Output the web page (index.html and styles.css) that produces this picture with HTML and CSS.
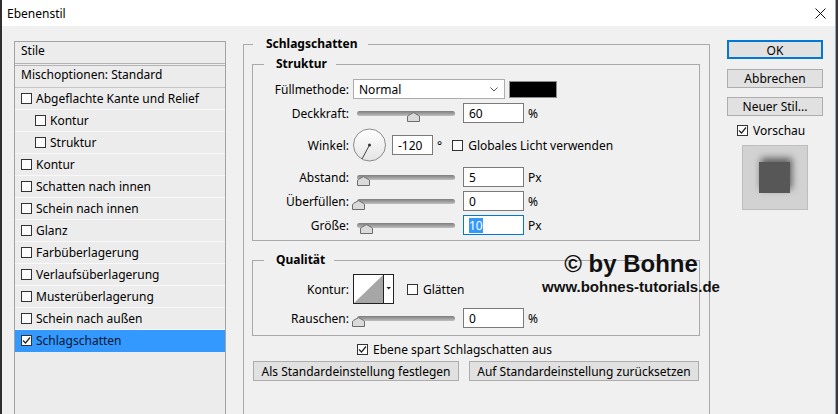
FILE: index.html
```html
<!DOCTYPE html>
<html lang="de">
<head>
    <meta charset="UTF-8">
    <title>Ebenenstil</title>
    <link rel="stylesheet" href="styles.css">
</head>
<body>
    <div class="window">
        <div class="titlebar">
            <span>Ebenenstil</span>
            <svg class="close" width="11" height="11" viewBox="0 0 11 11"><path d="M0.5 0.5 L10.5 10.5 M10.5 0.5 L0.5 10.5" stroke="#111" stroke-width="1" fill="none"/></svg>
        </div>

        <div class="main">
            <!-- style list -->
            <aside class="style-list">
                <div class="list-head">Stile</div>
                <div class="list-row blend">Mischoptionen: Standard</div>
                <div class="list-row"><span class="cb"></span>Abgeflachte Kante und Relief</div>
                <div class="list-row sub"><span class="cb"></span>Kontur</div>
                <div class="list-row sub"><span class="cb"></span>Struktur</div>
                <div class="list-row"><span class="cb"></span>Kontur</div>
                <div class="list-row"><span class="cb"></span>Schatten nach innen</div>
                <div class="list-row"><span class="cb"></span>Schein nach innen</div>
                <div class="list-row"><span class="cb"></span>Glanz</div>
                <div class="list-row"><span class="cb"></span>Farbüberlagerung</div>
                <div class="list-row"><span class="cb"></span>Verlaufsüberlagerung</div>
                <div class="list-row"><span class="cb"></span>Musterüberlagerung</div>
                <div class="list-row"><span class="cb"></span>Schein nach außen</div>
                <div class="list-row active"><span class="cb checked"><svg width="9" height="9" viewBox="0 0 9 9"><polyline points="1,4.5 3.5,7 8,1.5" fill="none" stroke="#222" stroke-width="1.2"/></svg></span>Schlagschatten</div>
            </aside>

            <!-- settings -->
            <fieldset class="group outer">
                <legend>Schlagschatten</legend>
                <div class="outer-body">
                    <fieldset class="group inner">
                        <legend>Struktur</legend>
                        <div class="rows struktur">
                            <div class="row">
                                <span class="lbl">Füllmethode:</span>
                                <div class="select">Normal
                                    <svg class="chev" width="8" height="5" viewBox="0 0 8 5"><polyline points="0.5,0.5 4,4 7.5,0.5" fill="none" stroke="#555" stroke-width="1"/></svg>
                                </div>
                                <span class="swatch"></span>
                            </div>
                            <div class="row">
                                <span class="lbl">Deckkraft:</span>
                                <div class="slider"><svg class="thumb" style="left: 50px" width="13" height="10" viewBox="0 0 13 10"><path d="M0.5 9.5 V5 Q0.5 4 1.5 3.4 L6.5 0.6 L11.5 3.4 Q12.5 4 12.5 5 V9.5 Z" fill="#dadada" stroke="#6c6c6c"/></svg></div>
                                <span class="field">60</span>
                                <span class="unit">%</span>
                            </div>
                            <div class="row tall">
                                <span class="lbl">Winkel:</span>
                                <svg class="dial" width="33" height="34" viewBox="0 0 33 34">
                                    <defs>
                                        <linearGradient id="dialFill" x1="0" y1="0" x2="0" y2="1">
                                            <stop offset="0" stop-color="#ffffff"/>
                                            <stop offset="1" stop-color="#e4e4e4"/>
                                        </linearGradient>
                                    </defs>
                                    <circle cx="16.5" cy="17" r="16" fill="url(#dialFill)" stroke="#8a8a8a" stroke-width="1"/>
                                    <line x1="16.5" y1="17" x2="9" y2="31" stroke="#444" stroke-width="1"/>
                                    <circle cx="16.5" cy="17" r="1.5" fill="#333"/>
                                </svg>
                                <span class="field angle">-120</span>
                                <span class="unit">°</span>
                                <span class="cb global"></span>
                                <span class="cb-text">Globales Licht verwenden</span>
                            </div>
                            <div class="row">
                                <span class="lbl">Abstand:</span>
                                <div class="slider"><svg class="thumb" style="left: 0px" width="13" height="10" viewBox="0 0 13 10"><path d="M0.5 9.5 V5 Q0.5 4 1.5 3.4 L6.5 0.6 L11.5 3.4 Q12.5 4 12.5 5 V9.5 Z" fill="#dadada" stroke="#6c6c6c"/></svg></div>
                                <span class="field">5</span>
                                <span class="unit">Px</span>
                            </div>
                            <div class="row">
                                <span class="lbl">Überfüllen:</span>
                                <div class="slider"><svg class="thumb" style="left: -5px" width="13" height="10" viewBox="0 0 13 10"><path d="M0.5 9.5 V5 Q0.5 4 1.5 3.4 L6.5 0.6 L11.5 3.4 Q12.5 4 12.5 5 V9.5 Z" fill="#dadada" stroke="#6c6c6c"/></svg></div>
                                <span class="field">0</span>
                                <span class="unit">%</span>
                            </div>
                            <div class="row">
                                <span class="lbl">Größe:</span>
                                <div class="slider"><svg class="thumb" style="left: 3px" width="13" height="10" viewBox="0 0 13 10"><path d="M0.5 9.5 V5 Q0.5 4 1.5 3.4 L6.5 0.6 L11.5 3.4 Q12.5 4 12.5 5 V9.5 Z" fill="#dadada" stroke="#6c6c6c"/></svg></div>
                                <span class="field focused"><span class="sel">10</span></span>
                                <span class="unit">Px</span>
                            </div>
                        </div>
                    </fieldset>

                    <fieldset class="group inner quality">
                        <legend>Qualität</legend>
                        <div class="rows qual">
                            <div class="row contour-row">
                                <span class="lbl">Kontur:</span>
                                <svg class="contour" width="41" height="30" viewBox="0 0 41 30">
                                    <rect x="0.5" y="0.5" width="40" height="29" fill="#fff" stroke="#222"/>
                                    <polygon points="1,29 30,1 30,29" fill="#a6a6a6"/>
                                    <line x1="30.5" y1="0.5" x2="30.5" y2="29.5" stroke="#222"/>
                                    <polygon points="33.5,13 38,13 35.75,15.5" fill="#222"/>
                                </svg>
                                <span class="cb smooth"></span>
                                <span class="cb-text">Glätten</span>
                            </div>
                            <div class="row">
                                <span class="lbl">Rauschen:</span>
                                <div class="slider"><svg class="thumb" style="left: -5px" width="13" height="10" viewBox="0 0 13 10"><path d="M0.5 9.5 V5 Q0.5 4 1.5 3.4 L6.5 0.6 L11.5 3.4 Q12.5 4 12.5 5 V9.5 Z" fill="#dadada" stroke="#6c6c6c"/></svg></div>
                                <span class="field">0</span>
                                <span class="unit">%</span>
                            </div>
                        </div>
                    </fieldset>

                    <div class="knockout">
                        <span class="cb checked"><svg width="9" height="9" viewBox="0 0 9 9"><polyline points="1,4.5 3.5,7 8,1.5" fill="none" stroke="#222" stroke-width="1.2"/></svg></span>
                        <span class="cb-text">Ebene spart Schlagschatten aus</span>
                    </div>

                    <div class="defaults">
                        <button class="btn wide-a">Als Standardeinstellung festlegen</button>
                        <button class="btn wide-b">Auf Standardeinstellung zurücksetzen</button>
                    </div>
                </div>
            </fieldset>

            <!-- dialog actions -->
            <div class="actions">
                <button class="btn ok">OK</button>
                <button class="btn cancel">Abbrechen</button>
                <button class="btn new-style">Neuer Stil...</button>
                <div class="preview-check">
                    <span class="cb checked"><svg width="9" height="9" viewBox="0 0 9 9"><polyline points="1,4.5 3.5,7 8,1.5" fill="none" stroke="#222" stroke-width="1.2"/></svg></span>
                    <span class="cb-text">Vorschau</span>
                </div>
                <div class="preview"><span class="preview-square"></span></div>
            </div>
        </div>

        <div class="watermark">
            <div class="wm-big">© by Bohne</div>
            <div class="wm-small">www.bohnes-tutorials.de</div>
        </div>
    </div>
</body>
</html>
```

FILE: styles.css
```css
/* Photoshop "Ebenenstil" dialog */
:root {
    --window-bg: #f0f0f0;
    --list-bg: #ececec;
    --line: #a9a9a9;
    --field-border: #7a7a7a;
    --btn-bg: #e1e1e1;
    --btn-border: #adadad;
    --accent: #0078d7;
    --select-blue: #3399ff;
}

* {
    box-sizing: border-box;
    margin: 0;
    padding: 0;
}

body {
    width: 838px;
    height: 414px;
    overflow: hidden;
    background: #3e3838;
    font-family: "Noto Sans", "Open Sans", sans-serif;
    font-size: 12px;
    color: #000;
}

.window {
    position: relative;
    width: 836px;
    height: 414px;
    overflow: hidden;
    background: var(--window-bg);
    border-left: 2px solid #2f2f2f;
    border-right: 1px solid #8ea9c6;
}

.titlebar {
    height: 26px;
    background: #fff;
    display: flex;
    align-items: center;
    justify-content: space-between;
    padding: 0 9px 0 5px;
}

/* grid: list | settings | buttons */
.main {
    display: grid;
    grid-template-columns: 212px 467px 96px;
    column-gap: 17px;
    align-items: start;
    padding: 10px 0 0 12px;
}

/* ---------- style list ---------- */
.style-list {
    margin-top: 5px;
    height: 390px;
    border: 1px solid #a3a3a3;
    background: var(--list-bg);
}

.list-head {
    height: 24px;
    line-height: 18px;
    padding-left: 6px;
    border-bottom: 3px double #b4b4b4;
}

.list-row {
    height: 22px;
    display: flex;
    align-items: center;
    gap: 4px;
    padding-left: 6px;
    border-bottom: 1px solid #f8f8f8;
}

.list-row.blend {
    padding-bottom: 5px;
    border-bottom-color: #c6c6c6;
}

.list-row.sub {
    padding-left: 20px;
}

.list-row.active {
    background: var(--select-blue);
    border-bottom-color: var(--select-blue);
    color: #0a1630;
}

/* checkboxes */
.cb {
    width: 11px;
    height: 11px;
    flex: none;
    border: 1px solid #333;
    background: #fcfcfc;
    display: inline-flex;
    align-items: center;
    justify-content: center;
}

.cb-text {
    margin-left: 5px;
}

/* ---------- group boxes ---------- */
fieldset.group {
    border: 1px solid var(--line);
    padding: 0;
    margin: 0;
    min-width: 0;
}

.group > legend {
    font-weight: 700;
    line-height: 16px;
}

.outer {
    height: 400px;
}

.outer > legend {
    margin-left: 9px;
    padding: 0 10px 0 13px;
}

.outer-body {
    padding: 4px 9px 0 8px;
}

.inner > legend {
    margin-left: 11px;
    padding: 0 9px 0 12px;
}

.inner.quality {
    margin-top: 11px;
}

.rows {
    display: flex;
    flex-direction: column;
    gap: 4px;
}

.rows.struktur {
    padding: 7px 0 5px;
}

.rows.qual {
    padding: 6px 0 7px;
    gap: 4px;
}

.row {
    height: 20px;
    display: flex;
    align-items: center;
}

.row.tall {
    height: 36px;
}

.row.contour-row {
    height: 30px;
}

.lbl {
    width: 96px;
    text-align: right;
    flex: none;
}

/* dropdown + colour */
.select {
    margin-left: 4px;
    width: 152px;
    height: 20px;
    border: 1px solid #acacac;
    background: #fff;
    display: flex;
    align-items: center;
    justify-content: space-between;
    padding: 0 6px 0 5px;
}

.swatch {
    margin-left: 4px;
    width: 48px;
    height: 17px;
    background: #000;
    border: 1px solid #8c8c8c;
}

/* sliders */
.slider {
    position: relative;
    margin-left: 8px;
    width: 98px;
    height: 5px;
    border-radius: 3px;
    background: linear-gradient(#7c7c7c, #c0c0c0);
}

.thumb {
    position: absolute;
    top: 1px;
}

/* text fields */
.field {
    margin-left: 8px;
    width: 61px;
    height: 20px;
    border: 1px solid var(--field-border);
    background: #fff;
    display: flex;
    align-items: center;
    padding-left: 5px;
}

.field.angle {
    margin-left: 6px;
    width: 41px;
}

.field.focused {
    border-color: var(--accent);
}

.field .sel {
    background: var(--select-blue);
    color: #fff;
    line-height: 15px;
}

.unit {
    margin-left: 4px;
}

.dial {
    margin-left: 4px;
    flex: none;
}

.cb.global {
    margin-left: 10px;
}

.contour {
    margin-left: 4px;
    flex: none;
}

.cb.smooth {
    margin-left: 13px;
}

.knockout {
    margin: 5px 0 0 105px;
    height: 16px;
    display: flex;
    align-items: center;
}

.defaults {
    margin: 4px 0 0 1px;
    display: flex;
    gap: 10px;
}

/* buttons */
.btn {
    height: 20px;
    font: inherit;
    color: #000;
    background: var(--btn-bg);
    border: 1px solid var(--btn-border);
}

.wide-a {
    width: 206px;
}

.wide-b {
    width: 230px;
}

.actions {
    margin-top: 4px;
    display: flex;
    flex-direction: column;
}

.actions .btn {
    width: 96px;
    height: 19px;
}

.btn.ok {
    border: 2px solid var(--accent);
}

.btn.cancel {
    margin-top: 10px;
}

.btn.new-style {
    margin-top: 9px;
}

.preview-check {
    margin-top: 6px;
    padding-left: 10px;
    height: 16px;
    display: flex;
    align-items: center;
}

.preview {
    margin: 7px 0 0 15px;
    width: 66px;
    height: 65px;
    padding: 16px;
    background: #d2d2d2;
    border: 1px solid #bdbdbd;
}

.preview-square {
    display: block;
    width: 31px;
    height: 31px;
    background: #575757;
    box-shadow: 2px -4px 7px rgba(0, 0, 0, 0.55);
}

/* watermark laid over the dialog */
.watermark {
    position: absolute;
    left: 529px;
    top: 252px;
    width: 200px;
    text-align: center;
    font-family: "Liberation Sans", Arial, sans-serif;
    font-weight: 700;
    color: #111;
}

.wm-big {
    font-size: 24px;
    line-height: 24px;
}

.wm-small {
    margin-top: 2px;
    font-size: 15px;
    line-height: 18px;
}
```
